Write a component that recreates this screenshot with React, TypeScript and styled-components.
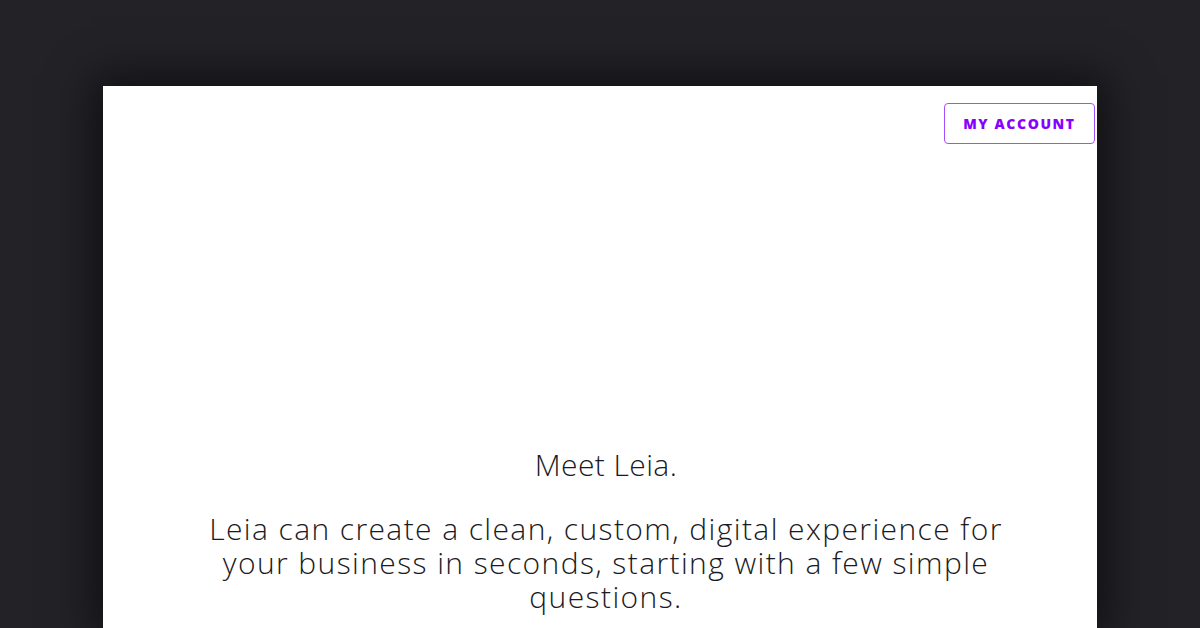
import React from "react";
import styled, { createGlobalStyle } from "styled-components";

const GlobalStyle = createGlobalStyle`
  html, body {
    margin: 0;
    padding: 0;
    background: #232227;
    height: 100%;
    overflow: hidden;
  }
  body {
    font-family: "Open Sans", "Noto Sans", sans-serif;
  }
`;

const Stage = styled.div`
  height: 628px;
  padding-top: 86px;
  box-sizing: border-box;
  display: flex;
  justify-content: center;
`;

const Panel = styled.div`
  width: 994px;
  height: 100%;
  background: #ffffff;
  box-shadow: 0 0 40px 10px rgba(0, 0, 0, 0.55);
  display: flex;
  flex-direction: column;
`;

const TopBar = styled.div`
  display: flex;
  justify-content: flex-end;
  padding: 17px 2px 0 0;
`;

const AccountButton = styled.button`
  width: 151px;
  height: 41px;
  border: 1px solid #a64dff;
  border-radius: 4px;
  background: #ffffff;
  color: #8800ff;
  font-family: "Open Sans", sans-serif;
  font-weight: 800;
  font-size: 14px;
  letter-spacing: 1.6px;
  text-transform: uppercase;
  cursor: pointer;
`;

const Hero = styled.div`
  margin-top: 304px;
  padding-left: 12px;
  display: flex;
  flex-direction: column;
  align-items: center;
  text-align: center;
  color: #1a1a24;
  font-weight: 300;
  font-size: 30px;
  line-height: 34px;
`;

const Title = styled.h1`
  margin: 0;
  font: inherit;
  letter-spacing: 0.4px;
`;

const Lead = styled.p`
  margin: 30px 0 0;
  width: 820px;
  letter-spacing: 1.4px;
`;

export default function App() {
  return (
    <>
      <GlobalStyle />
      <Stage>
        <Panel>
          <TopBar>
            <AccountButton>My Account</AccountButton>
          </TopBar>
          <Hero>
            <Title>Meet Leia.</Title>
            <Lead>
              Leia can create a clean, custom, digital experience for your
              business in seconds, starting with a few simple questions.
            </Lead>
          </Hero>
        </Panel>
      </Stage>
    </>
  );
}
